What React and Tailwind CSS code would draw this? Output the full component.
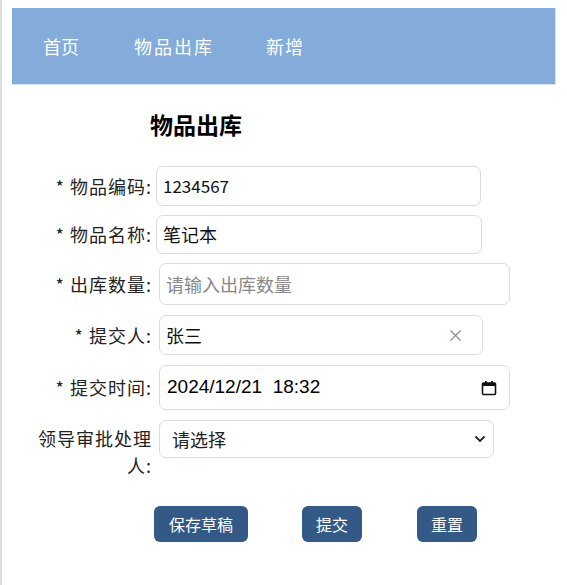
import React from 'react';

const font = { fontFamily: '"Noto Sans CJK SC", "Noto Sans", sans-serif' };

const Label = ({ children, className = '' }) => (
  <div className={`w-[120px] shrink-0 text-right text-[18px] leading-[27px] tracking-[1px] text-[#222] ${className}`}>{children}</div>
);

const Row = ({ label, children, className = '' }) => (
  <div className={`flex items-center ${className}`}>
    <Label>{label}</Label>
    {children}
  </div>
);

const CalendarIcon = () => (
  <svg width="16" height="16" viewBox="0 0 16 16" className="shrink-0">
    <rect x="1.5" y="3" width="13" height="11.5" rx="1" fill="none" stroke="#111" strokeWidth="1.6" />
    <rect x="1.5" y="3" width="13" height="3" fill="#111" />
    <rect x="4" y="1" width="1.8" height="3" fill="#111" />
    <rect x="10.2" y="1" width="1.8" height="3" fill="#111" />
  </svg>
);

const Chevron = () => (
  <svg width="12" height="8" viewBox="0 0 12 8" className="shrink-0">
    <path d="M1.5 1.5 L6 6 L10.5 1.5" fill="none" stroke="#222" strokeWidth="1.8" />
  </svg>
);

const App = () => (
  <div style={font} className="min-h-[585px] border-l-2 border-[#dcdce4] bg-white pt-[8px] pl-[10px] pr-[11px]">
    <header className="flex h-[77px] items-center border-b border-r border-[#d3e2f3] bg-[#83acdb] pl-[31px] text-[18px] text-white">
      <span>首页</span>
      <span className="ml-[55px] tracking-[2px]">物品出库</span>
      <span className="ml-[52px] tracking-[1px]">新增</span>
    </header>

    <h2 className="mt-[23px] pl-[138px] text-[23px] font-bold leading-[32px] text-black">物品出库</h2>

    <form className="mt-[26px] flex flex-col pl-[20px]">
      <Row label="* 物品编码:">
        <div className="ml-[4px] flex h-[40px] w-[325px] items-center rounded-[7px] border border-[#dcdcdc] px-[6px] text-[17px] text-[#111]">1234567</div>
      </Row>
      <Row label="* 物品名称:" className="mt-[9px]">
        <div className="ml-[4px] flex h-[39px] w-[326px] items-center rounded-[7px] border border-[#dcdcdc] px-[6px] text-[18px] text-[#111]">笔记本</div>
      </Row>
      <Row label="* 出库数量:" className="mt-[9px]">
        <div className="ml-[7px] flex h-[42px] w-[351px] items-center rounded-[7px] border border-[#dcdcdc] px-[6px] text-[18px] text-[#888]">请输入出库数量</div>
      </Row>
      <Row label="* 提交人:" className="mt-[10px]">
        <div className="ml-[7px] flex h-[40px] w-[324px] items-center justify-between rounded-[7px] border border-[#dcdcdc] pl-[6px] pr-[18px] text-[18px] text-[#111]">
          <span>张三</span>
          <span className="text-[17px] text-[#888]">×</span>
        </div>
      </Row>
      <Row label="* 提交时间:" className="mt-[10px]">
        <div className="ml-[7px] flex h-[45px] w-[351px] items-center justify-between rounded-[7px] border border-[#dcdcdc] pl-[7px] pr-[12px] text-[19px] text-black" style={{ fontFamily: '"Liberation Sans", Arial, sans-serif' }}>
          <span className="whitespace-pre">2024/12/21  18:32</span>
          <CalendarIcon />
        </div>
      </Row>
      <div className="mt-[10px] flex items-start">
        <Label className="pt-[5px]">领导审批处理人:</Label>
        <div className="ml-[7px] flex h-[38px] w-[335px] items-center justify-between rounded-[7px] border border-[#dcdcdc] pl-[12px] pr-[7px] text-[18px] text-[#222]">
          <span>请选择</span>
          <Chevron />
        </div>
      </div>

      <div className="mt-[27px] flex pl-[122px]">
        <button type="button" className="h-[36px] rounded-[6px] bg-[#335a87] px-[15px] text-[16px] text-white">保存草稿</button>
        <button type="button" className="ml-[54px] h-[36px] w-[60px] rounded-[6px] bg-[#335a87] text-[16px] text-white">提交</button>
        <button type="button" className="ml-[55px] h-[36px] w-[60px] rounded-[6px] bg-[#335a87] text-[16px] text-white">重置</button>
      </div>
    </form>
  </div>
);

export default App;
